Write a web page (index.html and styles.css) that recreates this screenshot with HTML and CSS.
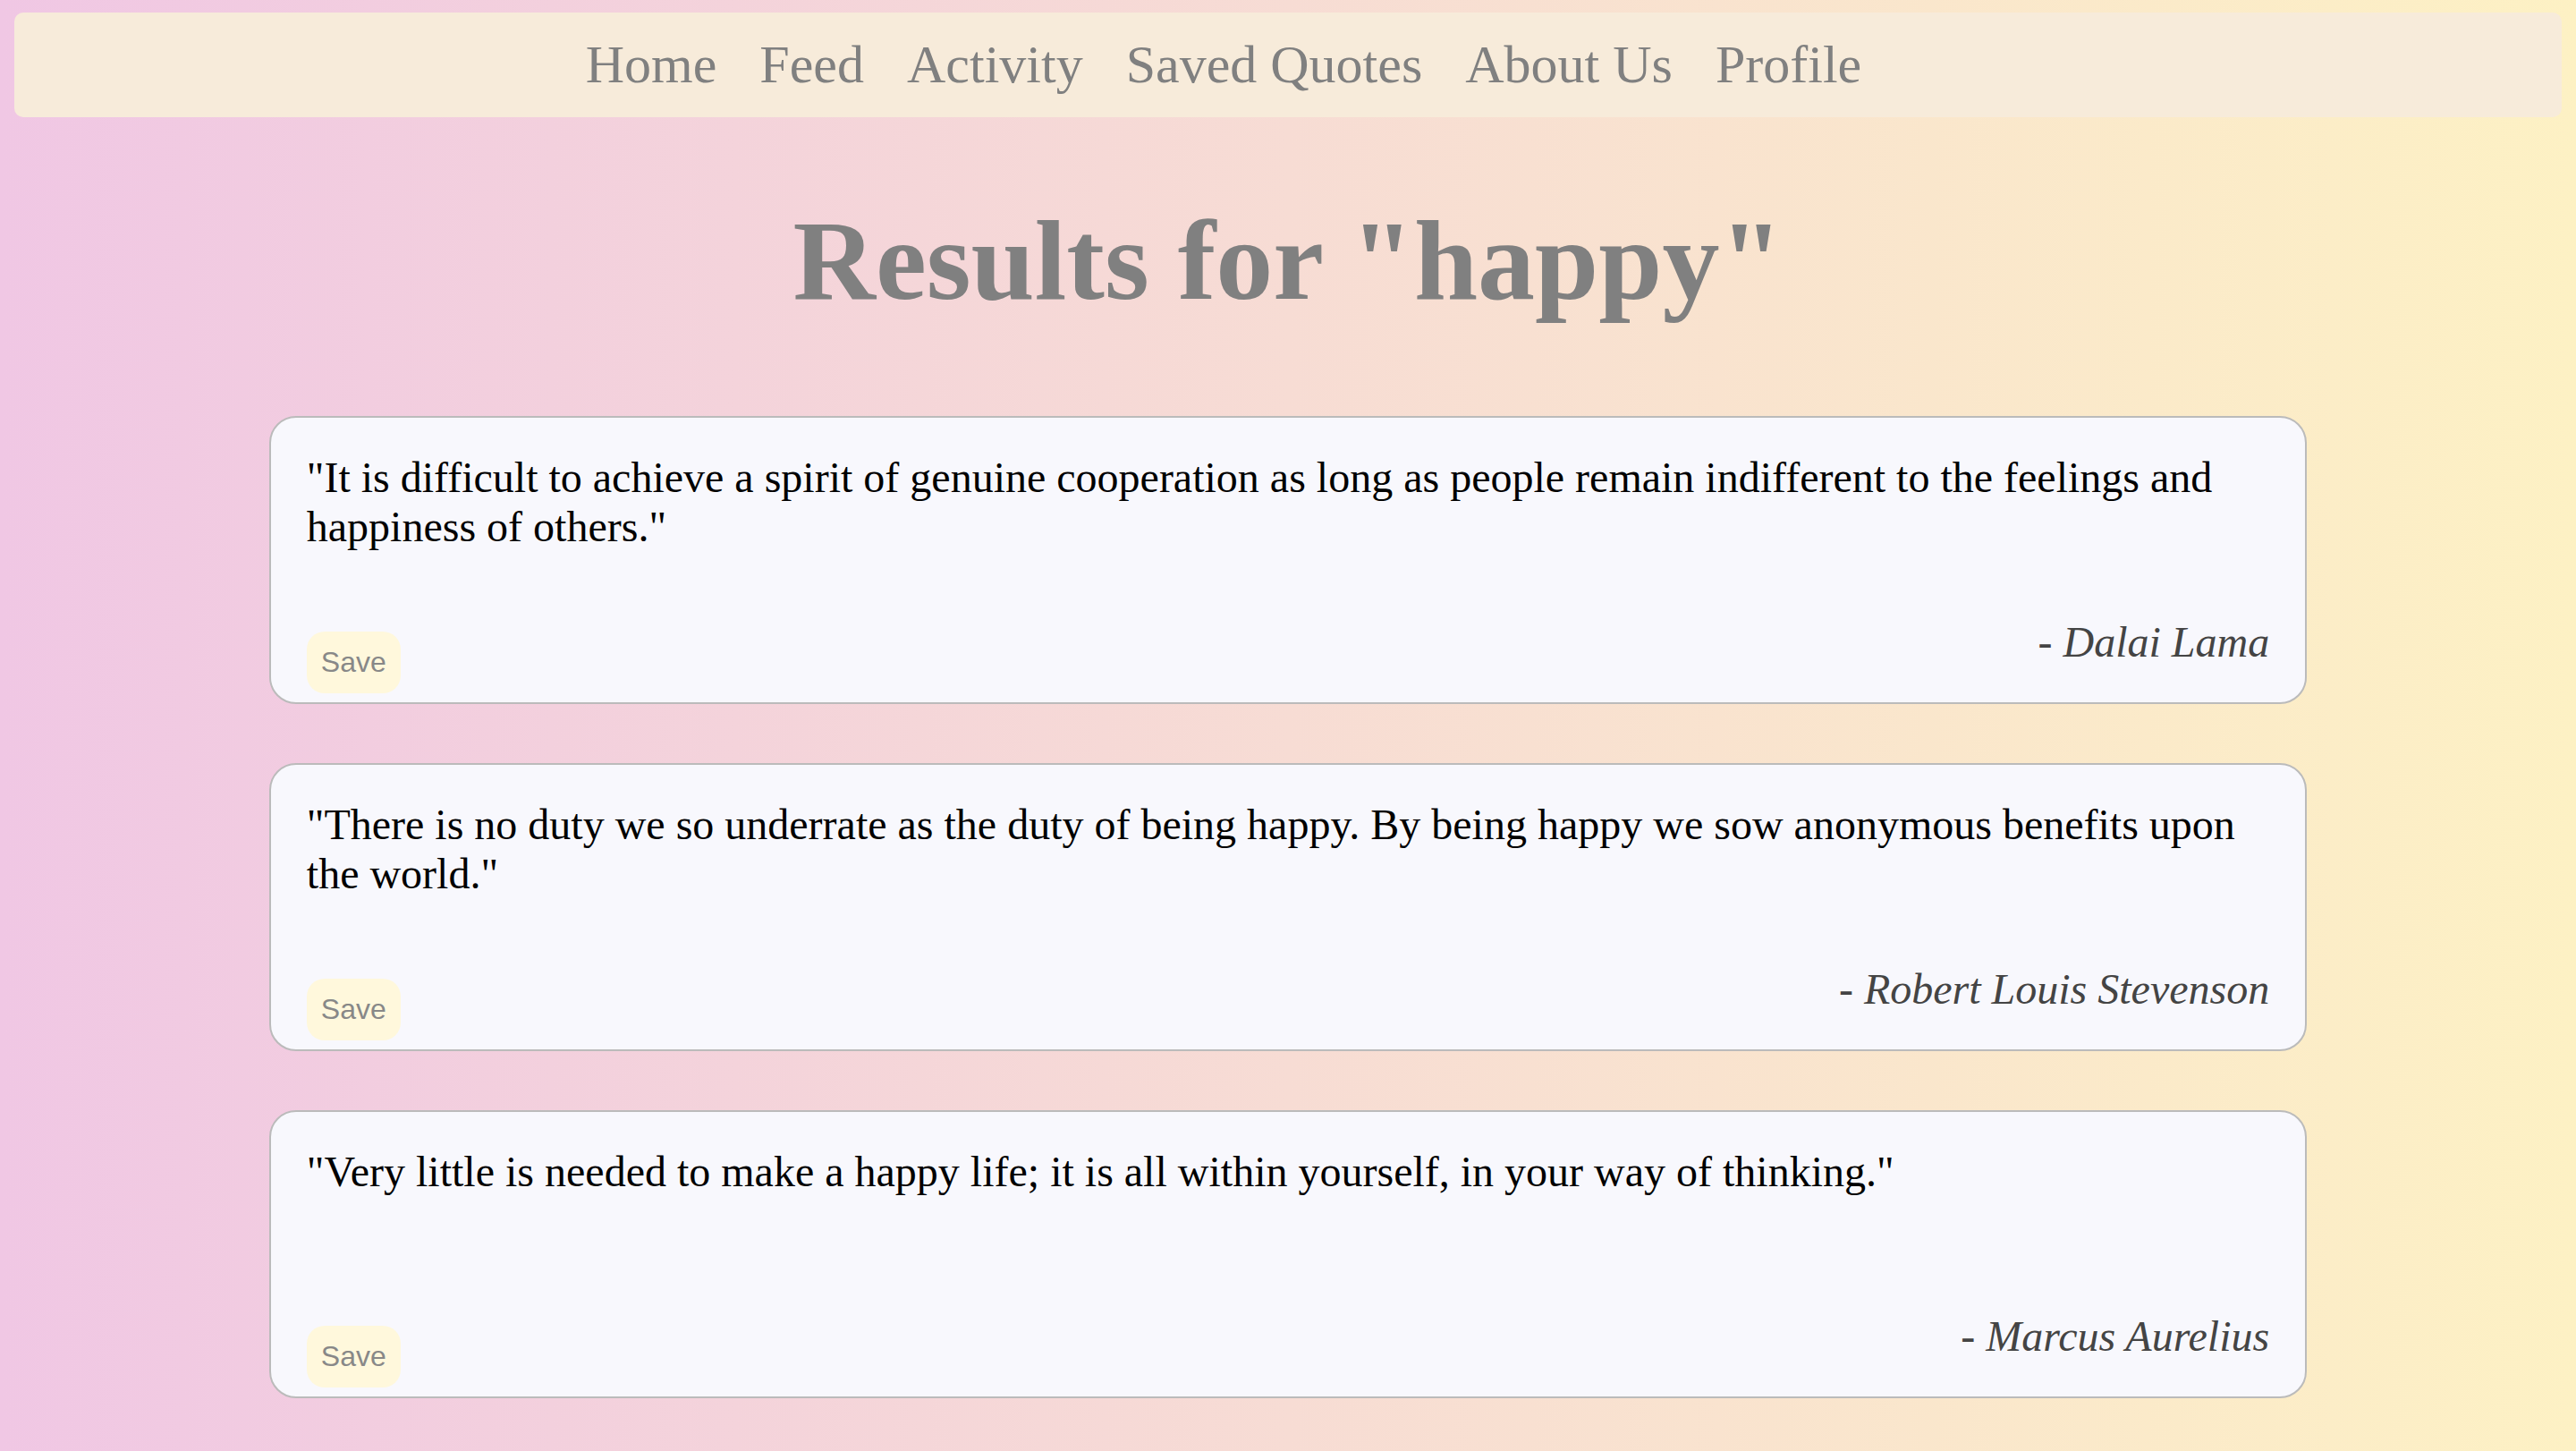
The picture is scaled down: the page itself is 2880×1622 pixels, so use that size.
FILE: index.html
```html
<!DOCTYPE html>
<html lang="en">
<head>
<meta charset="utf-8">
<title>Results for "happy"</title>
<link rel="stylesheet" href="styles.css">
</head>
<body>
<nav class="navbar">
  <a class="nav-link" href="#">Home</a>
  <a class="nav-link" href="#">Feed</a>
  <a class="nav-link" href="#">Activity</a>
  <a class="nav-link" href="#">Saved Quotes</a>
  <a class="nav-link" href="#">About Us</a>
  <a class="nav-link" href="#">Profile</a>
</nav>
<h1 class="page-title">Results for "happy"</h1>
<main class="results">
  <div class="quote-card">
    <p class="quote-text">"It is difficult to achieve a spirit of genuine cooperation as long as people remain indifferent to the feelings and happiness of others."</p>
    <div class="quote-footer">
      <button class="save-btn">Save</button>
      <p class="quote-author">- Dalai Lama</p>
    </div>
  </div>
  <div class="quote-card">
    <p class="quote-text">"There is no duty we so underrate as the duty of being happy. By being happy we sow anonymous benefits upon the world."</p>
    <div class="quote-footer">
      <button class="save-btn">Save</button>
      <p class="quote-author">- Robert Louis Stevenson</p>
    </div>
  </div>
  <div class="quote-card">
    <p class="quote-text">"Very little is needed to make a happy life; it is all within yourself, in your way of thinking."</p>
    <div class="quote-footer">
      <button class="save-btn">Save</button>
      <p class="quote-author">- Marcus Aurelius</p>
    </div>
  </div>
</main>
</body>
</html>
```

FILE: styles.css
```css
html {
  min-height: 100%;
  background: linear-gradient(to right, #f0c7e4 0%, #f7dcd4 50%, #fdf1c4 100%);
}

body {
  margin: 14px 16px 0;
  font-family: "Liberation Serif", "Times New Roman", serif;
  min-height: 1608px;
}

.navbar {
  display: flex;
  justify-content: center;
  align-items: center;
  gap: 48px;
  height: 117px;
  box-sizing: border-box;
  padding-right: 144px;
  background: #f7ebda;
  border-radius: 10px;
}

.nav-link {
  font-size: 60px;
  line-height: normal;
  color: #808080;
  text-decoration: none;
}

.page-title {
  margin: 87px 0 100px;
  text-align: center;
  font-size: 128px;
  font-weight: bold;
  line-height: normal;
  color: #808080;
}

.results {
  width: 80%;
  margin: 0 auto;
  display: flex;
  flex-direction: column;
  gap: 66px;
}

.quote-card {
  height: 322px;
  box-sizing: border-box;
  display: flex;
  flex-direction: column;
  justify-content: space-between;
  padding: 39px 40px 10px 40px;
  background: #f8f8fd;
  border: 2px solid #bbbbbb;
  border-radius: 30px;
}

.quote-text {
  margin: 0;
  font-size: 48px;
  line-height: normal;
  color: #000;
}

.quote-footer {
  display: flex;
  justify-content: space-between;
  align-items: flex-end;
}

.quote-author {
  margin: 0 0 30px;
  font-size: 48px;
  line-height: normal;
  font-style: italic;
  color: #444444;
}

.save-btn {
  font-family: "Liberation Sans", Arial, sans-serif;
  font-size: 32px;
  line-height: normal;
  color: #888888;
  background: #fff8dc;
  border: none;
  border-radius: 20px;
  padding: 16px;
}
```
